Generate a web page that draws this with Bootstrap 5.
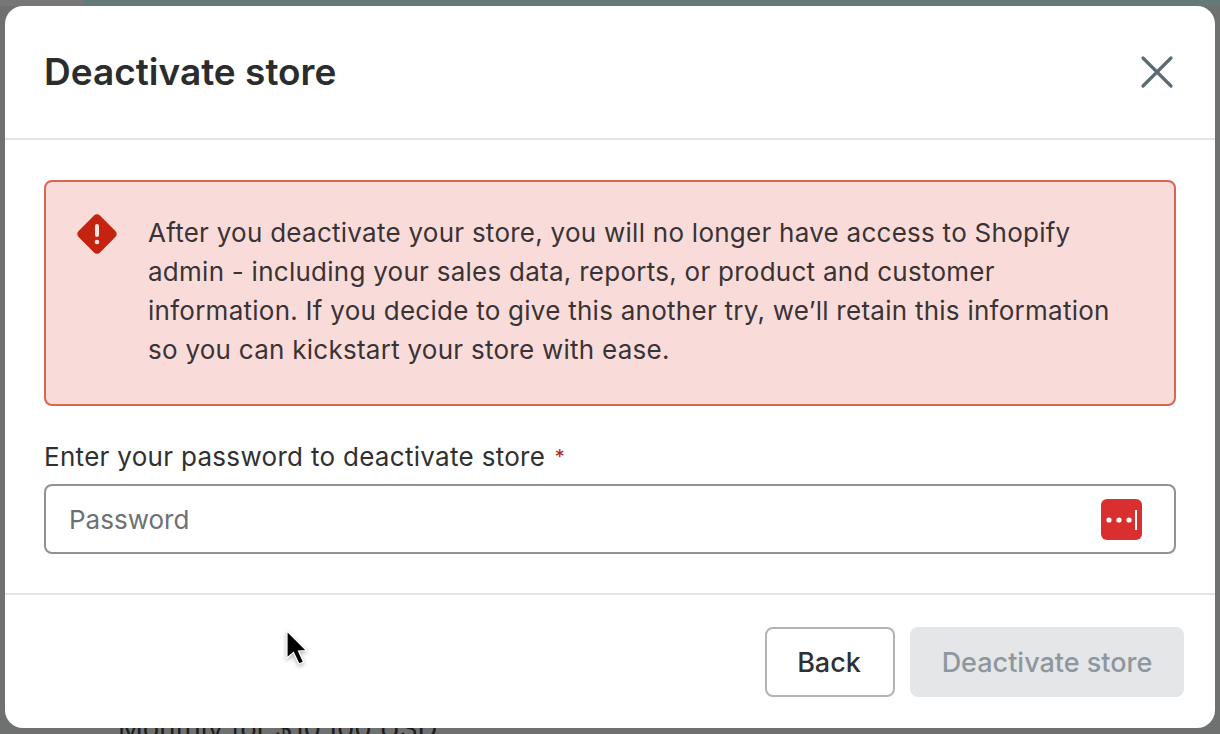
<!doctype html>
<html lang="en"><head><meta charset="utf-8"><title>Deactivate store</title>
<link rel="stylesheet" href="https://cdn.jsdelivr.net/npm/bootstrap@5.3.0/dist/css/bootstrap.min.css">
<style>
html,body{height:734px;overflow:hidden}
body{background:#6f7070;font-family:Inter,"Liberation Sans",sans-serif;color:#303030;position:relative;-webkit-font-smoothing:antialiased}
.top-strip{height:6px;display:flex}
.top-grey{width:83px;background:#777}
.top-teal{flex:1;background:#64797a}
.peek{position:absolute;left:118px;top:711px;font-size:27.500px;line-height:34px;color:#1c1c1c;white-space:nowrap}
.dialog{position:relative;z-index:1;margin-left:5px;width:1210px;height:722px;background:#fff;border-radius:18px;overflow:hidden;display:flex;flex-direction:column}
.dlg-head{height:134px;padding:0 40px 0 39px;border-bottom:2px solid #e3e4e5;display:flex;align-items:center;justify-content:space-between}
.dlg-title{font-size:37px;font-weight:600;line-height:44px;margin:0;color:#2b2c2d}
.x-btn{background:none;border:0;padding:0;line-height:0}
.dlg-body{height:455px;padding:40px 39px 0;border-bottom:2px solid #e3e4e5}
.warn{height:226px;background:#f9dcd9;border:2px solid #d9664f;border-radius:8px;padding:31px 50px 0 31px;display:flex;gap:31px;margin-bottom:35px}
.warn svg{flex:none;margin-top:1px}
.warn p{margin:0;font-size:26px;line-height:39px;color:#3a3335;letter-spacing:.26px}
.pw-label{font-size:26px;line-height:32px;color:#303030;margin:0 0 11px;display:block;letter-spacing:.3px}
.req{color:#b5260f;font-size:20px;margin-left:2px;vertical-align:2px}
.pw-wrap{height:70px;border:2px solid #8f9193;border-radius:8px;display:flex;align-items:center;justify-content:space-between;padding:0 32px 0 23px}
.pw-wrap input{border:0;outline:0;flex:1;font-size:26px;color:#303030;background:transparent;padding:0}
.pw-wrap input::placeholder{color:#6d7175;opacity:1}
.dlg-foot{flex:1;display:flex;justify-content:flex-end;align-items:flex-start;gap:15px;padding:32px 31px 0 0}
.btn.act{height:70px;border-radius:8px;font-size:27px;font-weight:500;line-height:1;padding:0}
.btn.act-back{width:130px;background:#fff;border:2px solid #b1b3b5;color:#2f3032;text-indent:-2px}
.btn.act-off,.btn.act-off:disabled{width:274px;background:#e4e6e8;border:0;color:#8f979e;opacity:1}
.pointer{position:absolute;z-index:2;left:284px;top:628px;filter:drop-shadow(0 2px 2px rgba(0,0,0,.3))}
</style></head><body>
<div class="top-strip"><div class="top-grey"></div><div class="top-teal"></div></div>
<div class="peek">Monthly for $10,100 USD</div>
<main class="dialog">
<header class="dlg-head"><h1 class="dlg-title">Deactivate store</h1>
<button class="x-btn" aria-label="Close" type="button"><svg width="36" height="36" viewBox="0 0 36 36"><path d="M4 4 L32 32 M32 4 L4 32" stroke="#5c6a72" stroke-width="3.2" stroke-linecap="round"/></svg></button></header>
<section class="dlg-body">
<div class="warn"><svg width="40" height="40" viewBox="0 0 40 40"><path d="M17 1.6a4.2 4.2 0 0 1 6 0L38.4 17a4.2 4.2 0 0 1 0 6L23 38.400a4.200 4.200 0 0 1-6 0L1.600 23a4.200 4.200 0 0 1 0-6Z" fill="#c4230f"/><rect x="18" y="10" width="4" height="13" rx="2" fill="#fbe3df"/><circle cx="20" cy="28" r="2.300" fill="#fbe3df"/></svg>
<p>After you deactivate your store, you will no longer have access to Shopify admin - including your sales data, reports, or product and customer information. If you decide to give this another try, we’ll retain this information so you can kickstart your store with ease.</p></div>
<label class="pw-label" for="pw">Enter your password to deactivate store <span class="req">*</span></label>
<div class="pw-wrap"><input id="pw" type="password" placeholder="Password">
<svg width="41" height="41" viewBox="0 0 41 41"><rect width="41" height="41" rx="6" fill="#d9302f"/><circle cx="8" cy="21" r="2.600" fill="#fff"/><circle cx="18" cy="21" r="2.600" fill="#fff"/><circle cx="28" cy="21" r="2.600" fill="#fff"/><rect x="34" y="11" width="2" height="20" fill="#fff"/></svg></div>
</section>
<footer class="dlg-foot"><button class="btn act act-back" type="button">Back</button><button class="btn act act-off" type="button" disabled>Deactivate store</button></footer>
</main>
<svg class="pointer" width="28" height="40" viewBox="0 0 28 40"><path d="M3 3 L3 30 L9.500 24.500 L15 36 L19.500 34 L14.500 23 L22.500 22.500 Z" fill="#000" stroke="#fff" stroke-width="1.200"/></svg>
</body></html>
